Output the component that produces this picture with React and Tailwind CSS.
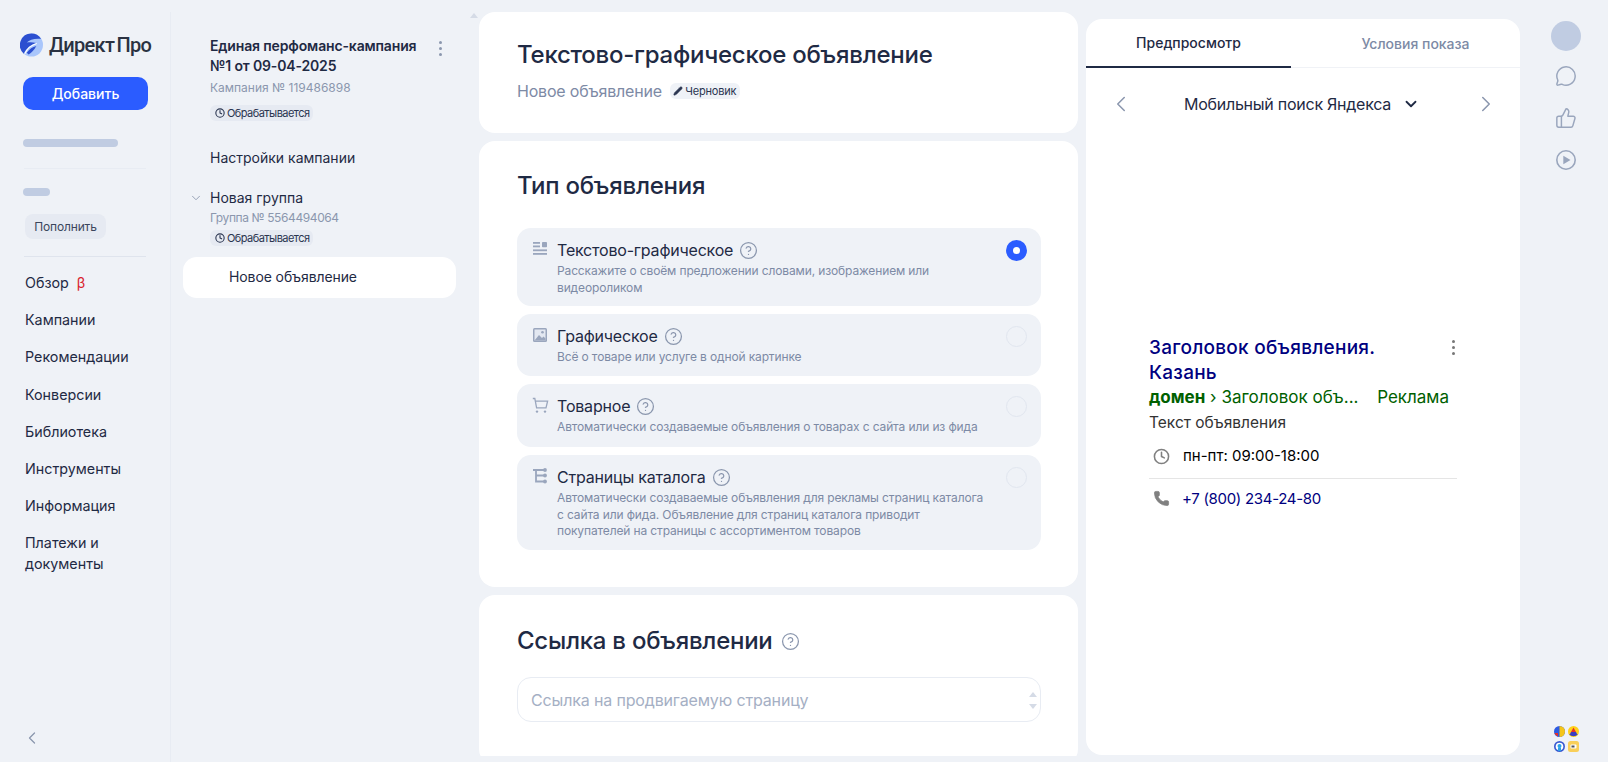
import React from "react";
import {
  ChevronDown,
  ChevronLeft,
  ChevronRight,
  CircleHelp,
  Clock,
  MessageCircle,
  Pencil,
  Phone,
  ThumbsUp,
} from "lucide-react";

const navItems = ["Кампании", "Рекомендации", "Конверсии", "Библиотека", "Инструменты", "Информация"];

const TextIcon = () => (
  <svg width="16" height="16" viewBox="0 0 16 16" fill="#9aa6bd">
    <rect x="1" y="1" width="7" height="1.8" />
    <rect x="1" y="4.5" width="7" height="1.8" />
    <rect x="10" y="1" width="5" height="5.3" rx="0.8" />
    <rect x="1" y="8.4" width="14" height="1.8" />
    <rect x="1" y="12" width="14" height="1.8" />
  </svg>
);

const ImageIcon = () => (
  <svg width="16" height="16" viewBox="0 0 16 16">
    <rect x="1" y="1" width="14" height="14" rx="1.5" fill="#9aa6bd" />
    <rect x="2.5" y="2.5" width="11" height="11" fill="#e3e8f1" />
    <path d="M2.5 13.5 L7 8 L10 11 L11.5 9.5 L13.5 11.5 V13.5 Z" fill="#9aa6bd" />
    <circle cx="10.5" cy="5.3" r="1.3" fill="#9aa6bd" />
  </svg>
);

const CartIcon = () => (
  <svg width="17" height="17" viewBox="0 0 17 17" fill="none" stroke="#9aa6bd" strokeWidth="1.3">
    <path d="M0.8 1.5 H2.8 L4.6 10.8 H14 L15.6 4.2 H3.4" />
    <circle cx="5" cy="14.6" r="1.2" fill="#9aa6bd" stroke="none" />
    <circle cx="13" cy="14.6" r="1.2" fill="#9aa6bd" stroke="none" />
  </svg>
);

const CatalogIcon = () => (
  <svg width="16" height="16" viewBox="0 0 16 16" fill="none" stroke="#9aa6bd" strokeWidth="1.8">
    <path d="M1 2 H12 M4 2 V13.5 H12 M4 7.5 H12" />
    <circle cx="13" cy="2" r="1.9" fill="#9aa6bd" stroke="none" />
    <circle cx="13" cy="7.5" r="1.9" fill="#9aa6bd" stroke="none" />
    <circle cx="13" cy="13.5" r="1.9" fill="#9aa6bd" stroke="none" />
  </svg>
);

const PlayIcon = () => (
  <svg className="mt-[20px]" width="22" height="22" viewBox="0 0 22 22" fill="none" stroke="#9aa6bd" strokeWidth="1.6">
    <circle cx="11" cy="11" r="9.2" />
    <path d="M8.3 6.8 L15.5 11 L8.3 15.2 Z" fill="#9aa6bd" stroke="none" />
  </svg>
);

const options = [
  {
    title: "Текстово-графическое",
    desc: ["Расскажите о своём предложении словами, изображением или", "видеороликом"],
    icon: <TextIcon />,
    height: "h-[78px]",
    active: true,
  },
  {
    title: "Графическое",
    desc: ["Всё о товаре или услуге в одной картинке"],
    icon: <ImageIcon />,
    height: "h-[62px]",
  },
  {
    title: "Товарное",
    desc: ["Автоматически создаваемые объявления о товарах с сайта или из фида"],
    icon: <CartIcon />,
    height: "h-[63px]",
  },
  {
    title: "Страницы каталога",
    desc: [
      "Автоматически создаваемые объявления для рекламы страниц каталога",
      "с сайта или фида. Объявление для страниц каталога приводит",
      "покупателей на страницы с ассортиментом товаров",
    ],
    icon: <CatalogIcon />,
    height: "h-[95px]",
  },
];

const Logo = () => (
  <svg width="23" height="24" viewBox="0 0 24 24">
    <circle cx="12" cy="12" r="12" fill="#a9c6fb" />
    <path d="M12 0 A12 12 0 0 0 4 21 C7 15 11 12 17 10 C13 9 10 9 7 9.5 C10 6 15 5 22 5.5 A12 12 0 0 0 12 0 Z" fill="#2c4fd0" />
    <path d="M7 20 C10 16 13 14 17 13 C15 17 12 20 9 22 Z" fill="#2c4fd0" />
    <path d="M5 21 C8 15 12 12 17.5 10.5" fill="none" stroke="#fff" strokeWidth="1.2" />
  </svg>
);

const StatusBadge = () => (
  <span className="flex h-[16px] w-[103px] items-center gap-[2px] rounded-[6px] bg-[#e6eaf2] pl-[5px] text-[11px] tracking-[-0.55px] text-[#2a3550]">
    <Clock size={10} strokeWidth={2.6} />
    Обрабатывается
  </span>
);

const Sidebar = () => (
  <aside className="mt-3 h-[750px] w-[171px] shrink-0 border-r border-[#e8ecf3] pt-[21px]">
    <div className="flex items-center gap-[6px] pl-[20px]">
      <Logo />
      <span className="text-[20px] font-medium leading-[24px] tracking-[-0.7px] text-[#2a3242] [font-family:Roboto,sans-serif] [word-spacing:-2px]">
        Директ Про
      </span>
    </div>
    <button className="ml-[23px] mt-[20px] block h-[33px] w-[125px] rounded-[10px] bg-[#2b5cff] pb-[1px] text-[14px] font-medium text-white">
      Добавить
    </button>
    <div className="ml-[23px] mt-[29px] h-[8px] w-[95px] rounded bg-[#c0cce2]"></div>
    <div className="ml-[24px] mt-[21px] h-px w-[122px] bg-[#e8ecf3]"></div>
    <div className="ml-[23px] mt-[19px] h-[8px] w-[27px] rounded bg-[#c0cce2]"></div>
    <div className="ml-[25px] mt-[18px] flex h-[25px] w-[81px] items-center justify-center rounded-[8px] bg-[#e6eaf2] text-[12px] tracking-[-0.15px] text-[#3b465c]">
      Пополнить
    </div>
    <div className="ml-[24px] mt-[17px] h-px w-[122px] bg-[#dfe4ed]"></div>
    <nav className="mt-[7px] pl-[25px] text-[14.3px] text-[#1f2a44]">
      <div className="flex h-[37px] items-center gap-[8px]">
        Обзор <span className="text-[#d9232d]">β</span>
      </div>
      {navItems.map((item) => (
        <div key={item} className="flex h-[37.3px] items-center">
          {item}
        </div>
      ))}
      <div className="mt-[7px] leading-[21px]">
        Платежи и
        <br />
        документы
      </div>
    </nav>
    <ChevronLeft className="ml-[22px] mt-[154px] text-[#8b97ae]" size={20} strokeWidth={1.5} />
  </aside>
);

const CampaignTree = () => (
  <section className="relative w-[308px] shrink-0 pl-[12px] pt-[36px] text-[#1f2a44]">
    <div className="pl-[27px]">
      <div className="flex items-start justify-between pr-[37px]">
        <h2 className="text-[14px] font-semibold leading-[20px] tracking-[-0.15px]">
          Единая перфоманс-кампания
          <br />
          №1 от 09-04-2025
        </h2>
        <div className="mt-[5px] flex flex-col gap-[3px]">
          <span className="size-[3px] rounded-full bg-[#8b97ae]"></span>
          <span className="size-[3px] rounded-full bg-[#8b97ae]"></span>
          <span className="size-[3px] rounded-full bg-[#8b97ae]"></span>
        </div>
      </div>
      <p className="mt-[3px] text-[12px] leading-[18px] text-[#8b97ae]">Кампания № 119486898</p>
      <div className="mt-[8px]">
        <StatusBadge />
      </div>
      <p className="mt-[27px] text-[14px] leading-[20px]">Настройки кампании</p>
      <div className="relative mt-[20px]">
        <ChevronDown className="absolute -left-[21px] top-[3px] text-[#8b97ae]" size={14} strokeWidth={1.5} />
        <p className="text-[14px] leading-[20px]">Новая группа</p>
      </div>
      <p className="mt-px text-[12px] leading-[18px] tracking-[-0.4px] text-[#8b97ae]">Группа № 5564494064</p>
      <div className="mt-[3px]">
        <StatusBadge />
      </div>
    </div>
    <div className="mt-[11px] flex h-[41px] w-[273px] items-center rounded-[14px] bg-white pb-[3px] pl-[46px] text-[14px] tracking-[-0.1px]">
      Новое объявление
    </div>
    <span className="absolute right-[1px] top-[13px] h-0 w-0 border-x-[4px] border-b-[5px] border-x-transparent border-b-[#d5dbe6]"></span>
  </section>
);

const OptionCard = ({ option }) => (
  <div className={`relative flex gap-[8px] rounded-[14px] bg-[#eff2f7] pl-[15px] pt-[12px] ${option.height}`}>
    <div className="w-[17px] shrink-0 pt-[1px]">{option.icon}</div>
    <div>
      <div className="flex items-center gap-[6px] text-[16px] leading-[20px] tracking-[-0.2px] text-[#1f2a44]">
        {option.title}
        <CircleHelp className="text-[#8b97ae]" size={19} strokeWidth={1.6} />
      </div>
      <p className="mt-[3px] text-[12px] leading-[16.5px] tracking-[-0.13px] text-[#7d8aa5]">
        {option.desc.map((line) => (
          <span key={line} className="block">
            {line}
          </span>
        ))}
      </p>
    </div>
    {option.active ? (
      <span className="absolute right-[14px] top-[12px] flex size-[21px] items-center justify-center rounded-full bg-[#2b5cff]">
        <span className="size-[7px] rounded-full bg-white"></span>
      </span>
    ) : (
      <span className="absolute right-[14px] top-[12px] size-[21px] rounded-full border border-[#e1e6ef]"></span>
    )}
  </div>
);

const MainColumn = () => (
  <main className="mt-3 flex h-[744px] w-[599px] shrink-0 flex-col gap-2 overflow-hidden text-[#1f2a44]">
    <div className="h-[121px] shrink-0 rounded-[16px] bg-white pl-[38px] pt-[28px]">
      <h1 className="text-[24px] font-medium leading-[30px] tracking-[-0.25px]">Текстово-графическое объявление</h1>
      <div className="mt-[10px] flex items-center gap-[8px]">
        <span className="text-[16px] leading-[22px] tracking-[-0.2px] text-[#7d8aa5]">Новое объявление</span>
        <span className="flex h-[16px] w-[70px] items-center justify-center gap-[2px] rounded-[6px] bg-[#eff2f7] text-[11px] tracking-[-0.2px] text-[#2a3550]">
          <Pencil size={10} fill="#2a3550" strokeWidth={1.5} />
          Черновик
        </span>
      </div>
    </div>
    <div className="h-[446px] shrink-0 rounded-[16px] bg-white pl-[38px] pr-[37px] pt-[30px]">
      <h2 className="text-[24px] font-medium leading-[30px] tracking-[-0.25px]">Тип объявления</h2>
      <div className="mt-[27px] flex flex-col gap-2">
        {options.map((option) => (
          <OptionCard key={option.title} option={option} />
        ))}
      </div>
    </div>
    <div className="h-[170px] shrink-0 rounded-[16px] bg-white pl-[38px] pr-[37px] pt-[31px]">
      <h2 className="flex items-center gap-[8px] text-[24px] font-medium leading-[30px] tracking-[-0.25px]">
        Ссылка в объявлении
        <CircleHelp className="text-[#8b97ae]" size={19} strokeWidth={1.6} />
      </h2>
      <div className="relative mt-[21px] flex h-[45px] items-center rounded-[14px] border border-[#e8ecf3] pl-[13px] text-[16px] tracking-[-0.15px] text-[#a5afc4]">
        Ссылка на продвигаемую страницу
        <span className="absolute right-[3px] top-[14px] flex flex-col gap-[7px]">
          <span className="h-0 w-0 border-x-[4px] border-b-[5px] border-x-transparent border-b-[#d5dbe6]"></span>
          <span className="h-0 w-0 border-x-[4px] border-t-[5px] border-x-transparent border-t-[#d5dbe6]"></span>
        </span>
      </div>
    </div>
  </main>
);

const Preview = () => (
  <section className="ml-[8px] mt-[19px] h-[736px] w-[434px] shrink-0 rounded-[16px] bg-white">
    <div className="flex h-[49px] border-b border-[#f0f2f6] text-[14px] font-medium">
      <div className="-mb-px flex w-[205px] items-center justify-center border-b-2 border-[#1f2a44] text-[#1f2a44]">
        Предпросмотр
      </div>
      <div className="flex flex-1 items-center justify-center pl-[20px] text-[#7d8aa5]">Условия показа</div>
    </div>
    <div className="flex h-[72px] items-center justify-between pb-[1px] pl-[22px] pr-[21px]">
      <ChevronLeft className="text-[#8b97ae]" size={26} strokeWidth={1.4} />
      <div className="flex items-center gap-[11px] pr-[3px] text-[16px] tracking-[-0.25px] text-[#1f2a44]">
        Мобильный поиск Яндекса
        <ChevronDown size={18} strokeWidth={2.4} />
      </div>
      <ChevronRight className="text-[#8b97ae]" size={26} strokeWidth={1.4} />
    </div>
    <article className="ml-[63px] mr-[63px] mt-[195px]">
      <div className="relative text-[19px] font-[450] leading-[25px] tracking-[0.25px] text-[#000080]">
        Заголовок объявления.
        <br />
        Казань
        <div className="absolute right-[2px] top-[5px] flex flex-col gap-[3px]">
          <span className="size-[3px] rounded-full bg-[#777]"></span>
          <span className="size-[3px] rounded-full bg-[#777]"></span>
          <span className="size-[3px] rounded-full bg-[#777]"></span>
        </div>
      </div>
      <div className="flex justify-between pr-[8px] text-[17px] leading-[25px] text-[#006000]">
        <span>
          <b>домен</b> › Заголовок объ...
        </span>
        <span>Реклама</span>
      </div>
      <p className="mt-px text-[15.5px] leading-[23px] text-[#333]">Текст объявления</p>
      <div className="mt-[11px] flex items-center gap-[13px] pl-[4px] text-[15px] text-black">
        <Clock className="text-[#808080]" size={17} strokeWidth={2.2} />
        пн-пт: 09:00-18:00
      </div>
      <div className="mt-[10px] h-px bg-[#e5e5e5]"></div>
      <div className="mt-[9px] flex items-center gap-[12px] pl-[4px] text-[15px] tracking-[-0.3px] text-[#000080]">
        <Phone className="text-[#808080]" size={17} fill="#808080" strokeWidth={1} />
        +7 (800) 234-24-80
      </div>
    </article>
  </section>
);

const Rail = () => (
  <aside className="flex w-[92px] shrink-0 flex-col items-center pt-[21px] text-[#9aa6bd]">
    <div className="size-[30px] rounded-full bg-[#c0cce2]"></div>
    <MessageCircle className="mt-[14px]" size={22} strokeWidth={1.6} />
    <ThumbsUp className="mt-[20px]" size={22} strokeWidth={1.6} />
    <PlayIcon />
    <div className="mt-[555px] grid grid-cols-2 gap-x-[3px] gap-y-[4px]">
      <svg width="11" height="11" viewBox="0 0 11 11">
        <circle cx="5.5" cy="5.5" r="5.5" fill="#2d5be3" />
        <path d="M5.5 0 A5.5 5.5 0 0 1 5.5 11 Z" fill="#f5c518" />
        <path d="M0.5 7 H4 V10.5 A5.5 5.5 0 0 1 0.5 7 Z" fill="#e5312b" />
      </svg>
      <svg width="11" height="11" viewBox="0 0 11 11">
        <circle cx="5.5" cy="5.5" r="5.5" fill="#ffd11a" />
        <path d="M5.5 1.5 L8 6 H3 Z" fill="#e5312b" />
        <path d="M1 8 H10 A5.5 5.5 0 0 1 1 8 Z M3 6 H8 L9 8 H2 Z" fill="#3a3fc4" />
      </svg>
      <svg width="11" height="11" viewBox="0 0 11 11">
        <circle cx="5.5" cy="5.5" r="5.5" fill="#3b5bd1" />
        <circle cx="5.5" cy="5.5" r="3.8" fill="#fff" />
        <circle cx="5.5" cy="5" r="2" fill="#2aa3e8" />
        <rect x="4" y="6.5" width="3" height="3.5" fill="#2aa3e8" />
      </svg>
      <svg width="11" height="11" viewBox="0 0 11 11">
        <rect width="11" height="11" rx="2.5" fill="#f9cf5a" />
        <rect x="2.5" y="3.5" width="6" height="4" rx="1" fill="#fff" />
        <rect x="3.5" y="4.5" width="3" height="2" fill="#555" />
      </svg>
    </div>
  </aside>
);

const App = () => {
  return (
    <div className="flex h-[762px] w-[1608px] overflow-hidden bg-[#eff2f7] [font-family:Inter,'Noto_Sans',sans-serif]">
      <Sidebar />
      <CampaignTree />
      <MainColumn />
      <Preview />
      <Rail />
    </div>
  );
};

export default App;
